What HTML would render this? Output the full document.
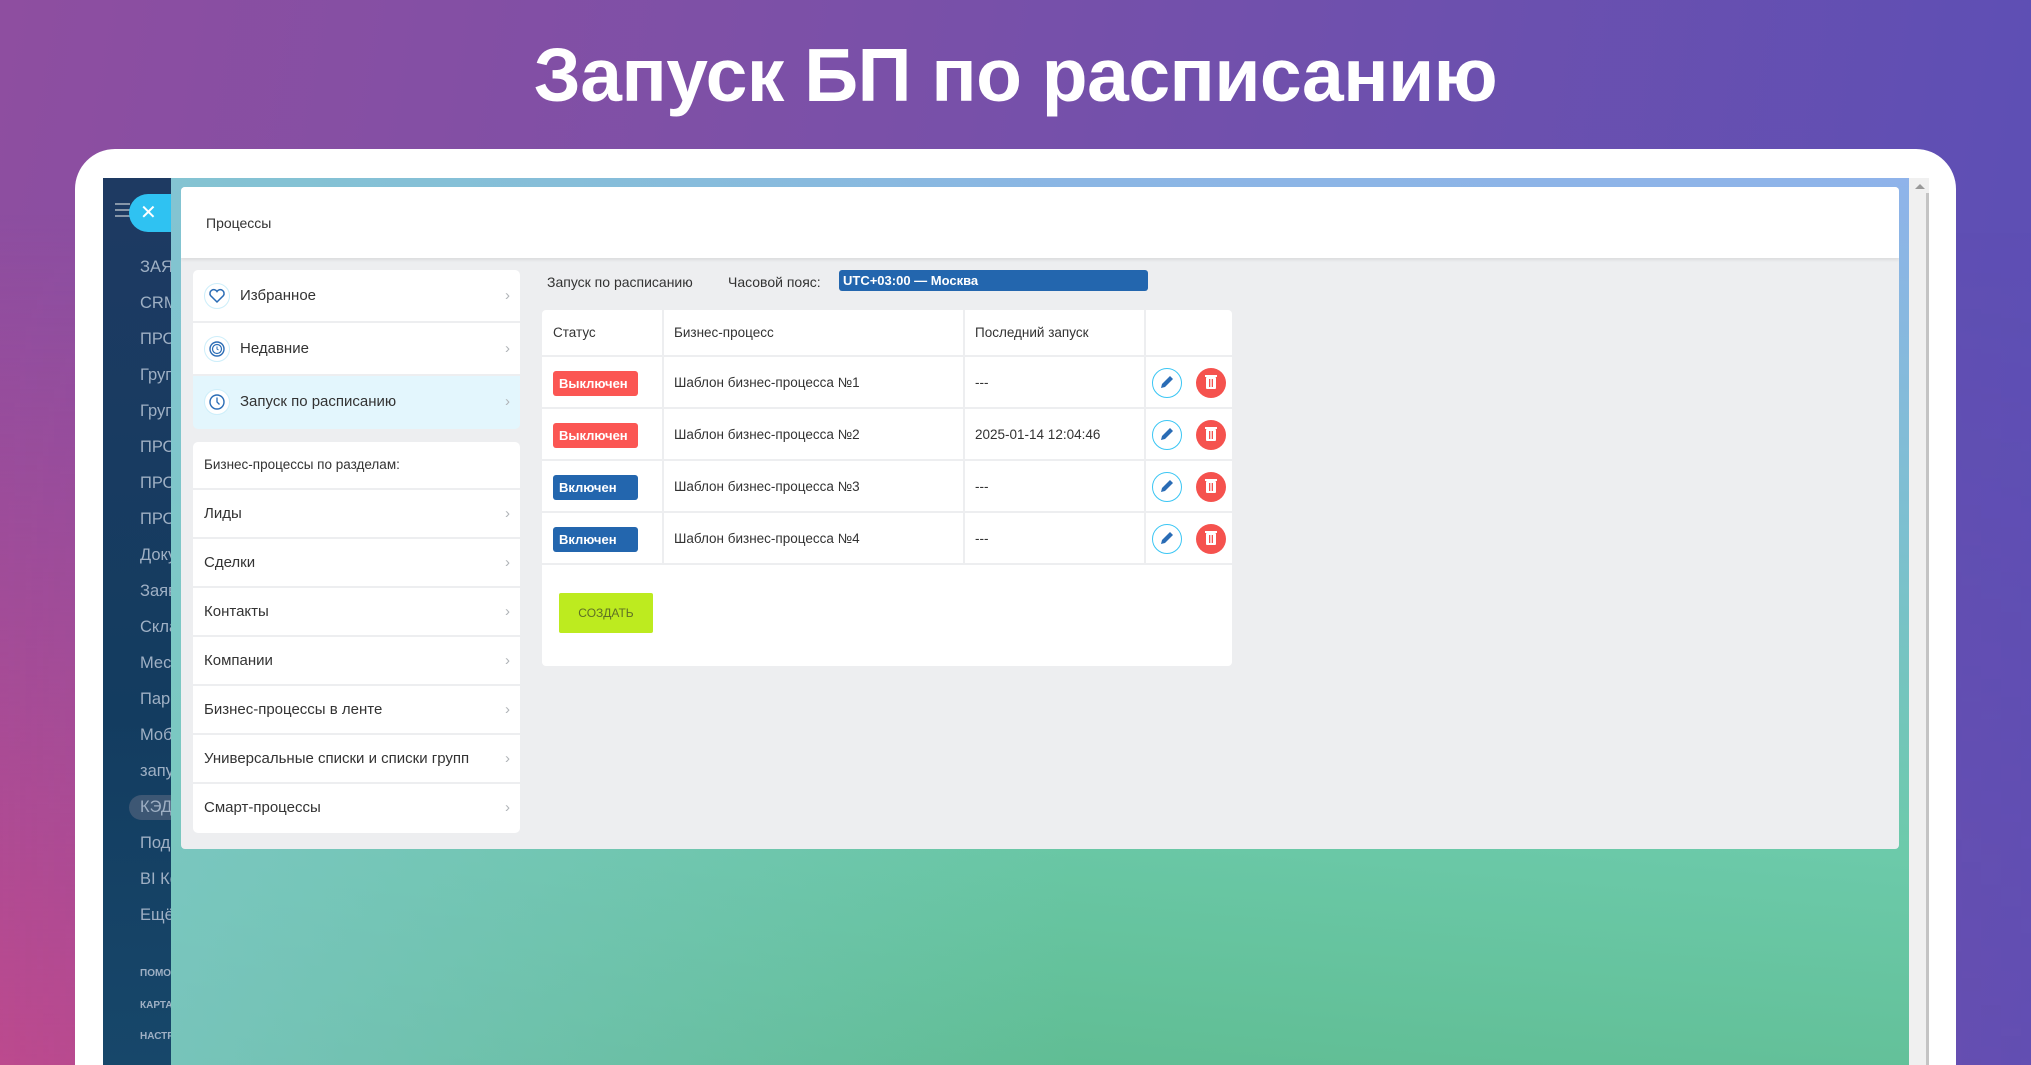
<!DOCTYPE html>
<html style="overflow:hidden;height:1065px"><head><meta charset="utf-8"><style>
*{box-sizing:border-box;margin:0;padding:0}
body{width:2031px;height:1065px;overflow:hidden;position:relative;font-family:"Liberation Sans","DejaVu Sans",sans-serif;
background:linear-gradient(100deg,#8e4ea0 0%,#7a50a8 40%,#5a4fb6 100%);}
.bgl{position:absolute;inset:0;background:linear-gradient(to bottom,rgba(0,0,0,0) 0%,rgba(205,70,140,.0) 20%,rgba(205,72,135,.75) 100%);-webkit-mask:linear-gradient(to right,#000 0%,rgba(0,0,0,.3) 50%,rgba(0,0,0,.1) 100%)}
h1{position:absolute;left:0;right:0;top:30px;text-align:center;color:#fff;font-size:75px;font-weight:bold;letter-spacing:-0.5px;line-height:90px}
.card{position:absolute;left:75px;top:149px;width:1881px;height:916px;background:#fff;border-radius:40px 40px 0 0}
.side{position:absolute;left:103px;top:178px;width:68px;height:887px;background:linear-gradient(to bottom,#1e3a62,#133c60 60%,#17476a);overflow:hidden}
.side div{position:absolute;left:37px;color:#9fb0c4;font-size:16.5px;white-space:nowrap}
.side .sm{font-size:10px;font-weight:bold;text-transform:uppercase}
.bgm{position:absolute;left:171px;top:178px;width:1738px;height:887px;background:linear-gradient(185deg,#8fb3ea 0%,#7cc0cf 35%,#6ccaaa 65%,#5dba8e 100%)}
.bgm2{position:absolute;left:171px;top:178px;width:900px;height:887px;background:linear-gradient(to right,rgba(130,200,205,.7),rgba(120,200,190,0))}
.scroll{position:absolute;left:1909px;top:178px;width:20px;height:887px;background:#f0f0f0}
.scroll i{position:absolute;right:0;top:15px;width:3px;bottom:0;background:#c4c4c4}
.panel{position:absolute;left:181px;top:187px;width:1718px;height:662px;background:#edeef0;border-radius:4px;overflow:hidden}
.head{position:absolute;left:0;top:0;right:0;height:71px;background:#fff;box-shadow:0 2px 3px rgba(0,0,0,.08)}
.head span{position:absolute;left:25px;top:28px;font-size:14px;color:#333}
.nav{position:absolute;left:12px;width:327px;background:#fff;border-radius:5px;font-size:15px;color:#333}
.row{position:relative;height:49px;border-bottom:2px solid #edeef0;line-height:47px;padding-left:11px}
.row:last-child{border-bottom:none}
.big{height:53px;line-height:51px}
.chev{position:absolute;right:10px;top:0;color:#b0b4b8;font-size:15px}
.ic{position:absolute;left:11px;top:13px;width:26px;height:26px;border-radius:50%;border:1.5px solid #cdeefa;background:#fff}
.ic svg{position:absolute;left:3px;top:3px}
.tc{position:absolute;left:361px;top:123px;width:690px;height:356px;background:#fff;border-radius:4px;font-size:13.5px;color:#333}
.tr{position:absolute;left:0;width:690px;border-bottom:2px solid #edeef0}
.vl{position:absolute;top:0;width:2px;height:255px;background:#edeef0}
.badge{position:absolute;left:11px;width:85px;height:25px;border-radius:3px;color:#fff;font-weight:bold;font-size:13px;line-height:25px;padding-left:6px}
.cell{position:absolute}
.ed{position:absolute;left:610px;width:30px;height:30px;border-radius:50%;border:1.5px solid #3bc6f4}
.tr2{position:absolute;left:654px;width:30px;height:30px;border-radius:50%;background:#f5524e}
</style></head><body>
<div class="bgl"></div>
<h1>Запуск БП по расписанию</h1>
<div class="card"></div>
<div class="side">
<div style="left:12px;top:25px;width:15px;height:2px;background:#8796a8"></div>
<div style="left:12px;top:31px;width:15px;height:2px;background:#8796a8"></div>
<div style="left:12px;top:37px;width:15px;height:2px;background:#8796a8"></div>
<div style="left:26px;top:16px;width:60px;height:38px;border-radius:19px;background:#2fc2f2;color:#fff;font-size:20px;line-height:38px;padding-left:11px">✕</div>
<div style="top:80px">ЗАЯВ</div><div style="top:116px">CRM</div><div style="top:152px">ПРО</div><div style="top:188px">Груп</div><div style="top:224px">Груп</div><div style="top:260px">ПРО</div><div style="top:296px">ПРО</div><div style="top:332px">ПРО</div><div style="top:368px">Доку</div><div style="top:404px">Заяв</div><div style="top:440px">Скла</div><div style="top:476px">Месс</div><div style="top:512px">Паро</div><div style="top:548px">Моб</div><div style="top:584px">запу</div>
<div style="left:26px;top:617px;width:60px;height:25px;border-radius:13px;background:#3d5774"></div>
<div style="top:620px">КЭД</div><div style="top:656px">Подп</div><div style="top:692px">BI Ко</div><div style="top:728px">Ещё</div>
<div class="sm" style="top:790px">помо</div><div class="sm" style="top:822px">карта</div><div class="sm" style="top:853px">настр</div>
</div>
<div class="bgm"></div><div class="bgm2"></div>
<div class="scroll"><i></i><b style="position:absolute;left:6px;top:6px;border:5px solid transparent;border-bottom:5px solid #999;border-top:0"></b></div>
<div class="panel">
<div class="head"><span>Процессы</span></div>
<div class="nav" style="top:83px;background:transparent">
 <div class="row big" style="background:#fff;border-radius:5px 5px 0 0;padding-left:47px"><div class="ic"><svg width="18" height="18" viewBox="0 0 18 18"><path d="M9 15 L2.5 8.5 A3.5 3.5 0 0 1 9 4.5 A3.5 3.5 0 0 1 15.5 8.5 Z" fill="none" stroke="#2a6cb5" stroke-width="1.5"/></svg></div>Избранное<span class="chev">›</span></div>
 <div class="row big" style="background:#fff;padding-left:47px"><div class="ic"><svg width="18" height="18" viewBox="0 0 18 18"><circle cx="9" cy="9" r="7" fill="none" stroke="#2a6cb5" stroke-width="1.4"/><circle cx="9" cy="9" r="4.5" fill="none" stroke="#2a6cb5" stroke-width="1.2"/><path d="M9 6.5V9l1.5 1" stroke="#2a6cb5" fill="none"/></svg></div>Недавние<span class="chev">›</span></div>
 <div class="row big" style="background:#e3f6fd;border-radius:0 0 5px 5px;padding-left:47px"><div class="ic"><svg width="18" height="18" viewBox="0 0 18 18"><circle cx="9" cy="9" r="7" fill="none" stroke="#2a6cb5" stroke-width="1.4"/><path d="M9 4.5V9l2.5 2.5" stroke="#2a6cb5" stroke-width="1.3" fill="none"/></svg></div>Запуск по расписанию<span class="chev">›</span></div>
</div>
<div class="nav" style="top:255px">
 <div class="row" style="font-size:13.5px;height:48px;line-height:46px">Бизнес-процессы по разделам:</div>
 <div class="row">Лиды<span class="chev">›</span></div>
 <div class="row">Сделки<span class="chev">›</span></div>
 <div class="row">Контакты<span class="chev">›</span></div>
 <div class="row">Компании<span class="chev">›</span></div>
 <div class="row">Бизнес-процессы в ленте<span class="chev">›</span></div>
 <div class="row">Универсальные списки и списки групп<span class="chev">›</span></div>
 <div class="row">Смарт-процессы<span class="chev">›</span></div>
</div>
<div style="position:absolute;left:366px;top:87px;font-size:14px;color:#333">Запуск по расписанию</div>
<div style="position:absolute;left:547px;top:87px;font-size:14px;color:#333">Часовой пояс:</div>
<div style="position:absolute;left:658px;top:83px;width:309px;height:21px;background:#2366ae;border-radius:3px;color:#fff;font-size:13px;font-weight:bold;line-height:21px;padding-left:4px">UTC+03:00 — Москва</div>
<div class="tc">
 <div class="vl" style="left:120px"></div><div class="vl" style="left:421px"></div><div class="vl" style="left:602px"></div>
 <div class="tr" style="top:0;height:47px"><span class="cell" style="left:11px;top:15px">Статус</span><span class="cell" style="left:132px;top:15px">Бизнес-процесс</span><span class="cell" style="left:433px;top:15px">Последний запуск</span></div>
 <div class="tr" style="top:47px;height:52px"><div class="badge" style="top:14px;background:#fb5653">Выключен</div><span class="cell" style="left:132px;top:18px">Шаблон бизнес-процесса №1</span><span class="cell" style="left:433px;top:18px">---</span><div class="ed" style="top:11px"><svg width="27" height="27" viewBox="0 0 27 27"><path d="M8 19l1-4 8-8 3 3-8 8z" fill="#2a6cb5"/></svg></div><div class="tr2" style="top:11px"><svg width="30" height="30"><rect x="10" y="9" width="10" height="12" rx="1" fill="#fff"/><rect x="9" y="7" width="12" height="2" fill="#fff"/><rect x="13" y="11" width="1.3" height="8" fill="#f5524e"/><rect x="15.7" y="11" width="1.3" height="8" fill="#f5524e"/></svg></div></div>
 <div class="tr" style="top:99px;height:52px"><div class="badge" style="top:14px;background:#fb5653">Выключен</div><span class="cell" style="left:132px;top:18px">Шаблон бизнес-процесса №2</span><span class="cell" style="left:433px;top:18px">2025-01-14 12:04:46</span><div class="ed" style="top:11px"><svg width="27" height="27" viewBox="0 0 27 27"><path d="M8 19l1-4 8-8 3 3-8 8z" fill="#2a6cb5"/></svg></div><div class="tr2" style="top:11px"><svg width="30" height="30"><rect x="10" y="9" width="10" height="12" rx="1" fill="#fff"/><rect x="9" y="7" width="12" height="2" fill="#fff"/><rect x="13" y="11" width="1.3" height="8" fill="#f5524e"/><rect x="15.7" y="11" width="1.3" height="8" fill="#f5524e"/></svg></div></div>
 <div class="tr" style="top:151px;height:52px"><div class="badge" style="top:14px;background:#2366ae">Включен</div><span class="cell" style="left:132px;top:18px">Шаблон бизнес-процесса №3</span><span class="cell" style="left:433px;top:18px">---</span><div class="ed" style="top:11px"><svg width="27" height="27" viewBox="0 0 27 27"><path d="M8 19l1-4 8-8 3 3-8 8z" fill="#2a6cb5"/></svg></div><div class="tr2" style="top:11px"><svg width="30" height="30"><rect x="10" y="9" width="10" height="12" rx="1" fill="#fff"/><rect x="9" y="7" width="12" height="2" fill="#fff"/><rect x="13" y="11" width="1.3" height="8" fill="#f5524e"/><rect x="15.7" y="11" width="1.3" height="8" fill="#f5524e"/></svg></div></div>
 <div class="tr" style="top:203px;height:52px"><div class="badge" style="top:14px;background:#2366ae">Включен</div><span class="cell" style="left:132px;top:18px">Шаблон бизнес-процесса №4</span><span class="cell" style="left:433px;top:18px">---</span><div class="ed" style="top:11px"><svg width="27" height="27" viewBox="0 0 27 27"><path d="M8 19l1-4 8-8 3 3-8 8z" fill="#2a6cb5"/></svg></div><div class="tr2" style="top:11px"><svg width="30" height="30"><rect x="10" y="9" width="10" height="12" rx="1" fill="#fff"/><rect x="9" y="7" width="12" height="2" fill="#fff"/><rect x="13" y="11" width="1.3" height="8" fill="#f5524e"/><rect x="15.7" y="11" width="1.3" height="8" fill="#f5524e"/></svg></div></div>
 <div style="position:absolute;left:17px;top:283px;width:94px;height:40px;background:#bdeb1f;border-radius:2px;color:#5f7025;font-size:12px;text-align:center;line-height:40px">СОЗДАТЬ</div>
</div>
</div>
</body></html>
